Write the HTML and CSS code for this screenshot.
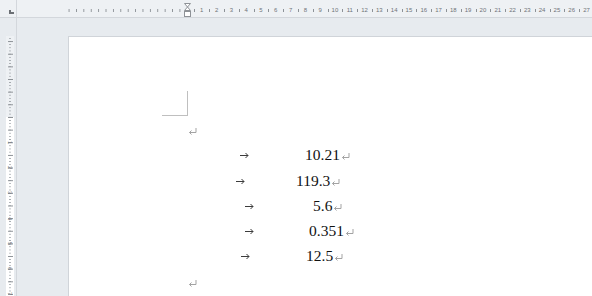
FILE: index.html
```html
<!DOCTYPE html>
<html lang="ja">
<head>
    <meta charset="UTF-8">
    <meta name="viewport" content="width=device-width, initial-scale=1.0">
    <title>Document</title>
    <link rel="stylesheet" href="styles.css">
</head>
<body>
    <div class="topbar">
        <div class="corner">
            <svg class="tab-selector" width="5" height="4" viewBox="0 0 5 4"><path d="M0 0h2v2h3v2H0z" fill="#6b6f74"/></svg>
        </div>
        <div class="hruler">
            <div class="hruler-margin"></div>
            <div class="indent-marker">
                <svg width="7" height="14" viewBox="0 0 7 14">
                    <path d="M0.5 0.5h6L3.5 4l3 3.5h-6L3.5 4z" fill="#fff" stroke="#8e9297"/>
                    <rect x="0.5" y="8.5" width="6" height="5" fill="#fff" stroke="#8e9297"/>
                </svg>
            </div>
            <div class="hruler-scale">
                <span>1</span><span>2</span><span>3</span><span>4</span><span>5</span><span>6</span><span>7</span><span>8</span><span>9</span>
                <span>10</span><span>11</span><span>12</span><span>13</span><span>14</span><span>15</span><span>16</span><span>17</span><span>18</span>
                <span>19</span><span>20</span><span>21</span><span>22</span><span>23</span><span>24</span><span>25</span><span>26</span><span>27</span>
            </div>
        </div>
    </div>

    <div class="main">
        <div class="vruler">
            <div class="vruler-margin"></div>
            <div class="vruler-text">
                <span>1</span><span>2</span><span>3</span><span>4</span><span>5</span><span>6</span><span>7</span>
            </div>
        </div>

        <div class="workspace">
            <div class="page">
                <div class="crop-mark"></div>
                <div class="body-text">
                    <p class="para"><svg class="mark" width="9" height="7" viewBox="0 0 9 7"><path d="M8 0v4.5H1.5M3.5 2.5l-2 2 2 2" fill="none" stroke="#a3a3a3"/></svg></p>
                    <p class="para row-1"><span class="tab"><svg width="9" height="7" viewBox="0 0 9 7"><path d="M0 3.5h8M5.5 1 8 3.5 5.5 6" fill="none" stroke="#3c3c3c"/></svg></span><span class="num">10.21</span><svg class="mark" width="9" height="7" viewBox="0 0 9 7"><path d="M8 0v4.5H1.5M3.5 2.5l-2 2 2 2" fill="none" stroke="#a3a3a3"/></svg></p>
                    <p class="para row-2"><span class="tab"><svg width="9" height="7" viewBox="0 0 9 7"><path d="M0 3.5h8M5.5 1 8 3.5 5.5 6" fill="none" stroke="#3c3c3c"/></svg></span><span class="num">119.3</span><svg class="mark" width="9" height="7" viewBox="0 0 9 7"><path d="M8 0v4.5H1.5M3.5 2.5l-2 2 2 2" fill="none" stroke="#a3a3a3"/></svg></p>
                    <p class="para row-3"><span class="tab"><svg width="9" height="7" viewBox="0 0 9 7"><path d="M0 3.5h8M5.5 1 8 3.5 5.5 6" fill="none" stroke="#3c3c3c"/></svg></span><span class="num">5.6</span><svg class="mark" width="9" height="7" viewBox="0 0 9 7"><path d="M8 0v4.5H1.5M3.5 2.5l-2 2 2 2" fill="none" stroke="#a3a3a3"/></svg></p>
                    <p class="para row-4"><span class="tab"><svg width="9" height="7" viewBox="0 0 9 7"><path d="M0 3.5h8M5.5 1 8 3.5 5.5 6" fill="none" stroke="#3c3c3c"/></svg></span><span class="num">0.351</span><svg class="mark" width="9" height="7" viewBox="0 0 9 7"><path d="M8 0v4.5H1.5M3.5 2.5l-2 2 2 2" fill="none" stroke="#a3a3a3"/></svg></p>
                    <p class="para row-5"><span class="tab"><svg width="9" height="7" viewBox="0 0 9 7"><path d="M0 3.5h8M5.5 1 8 3.5 5.5 6" fill="none" stroke="#3c3c3c"/></svg></span><span class="num">12.5</span><svg class="mark" width="9" height="7" viewBox="0 0 9 7"><path d="M8 0v4.5H1.5M3.5 2.5l-2 2 2 2" fill="none" stroke="#a3a3a3"/></svg></p>
                    <p class="para"><svg class="mark" width="9" height="7" viewBox="0 0 9 7"><path d="M8 0v4.5H1.5M3.5 2.5l-2 2 2 2" fill="none" stroke="#a3a3a3"/></svg></p>
                </div>
            </div>
        </div>
    </div>
</body>
</html>
```

FILE: styles.css
```css
body {
    margin: 0;
    height: 296px;
    overflow: hidden;
    background-color: #e7ebef;
    font-family: "Liberation Sans", Arial, sans-serif;
}
.topbar {
    display: flex;
    height: 17px;
    border-bottom: 1px solid #d3d7dc;
    background-color: #eef1f4;
}
.corner {
    width: 17px;
    flex: none;
    border-right: 1px solid #d3d7dc;
    padding: 10px 0 0 9px;
    box-sizing: border-box;
}
.tab-selector {
    display: block;
}
.hruler {
    display: flex;
    padding-left: 51px;
}
.hruler-margin {
    width: 116px;
    flex: none;
    background: linear-gradient(to right, #8d9297 1px, transparent 1px) 0.6px 9px / 7.4px 3px repeat-x;
}
.indent-marker {
    width: 7px;
    flex: none;
    padding-top: 3px;
}
.indent-marker svg {
    display: block;
}
.hruler-scale {
    display: flex;
    padding-left: 3.4px;
}
.hruler-scale span {
    width: 14.8px;
    flex: none;
    text-align: center;
    font-size: 6px;
    line-height: 17px;
    padding-top: 2px;
    box-sizing: border-box;
    color: #6f7378;
    background: linear-gradient(#8d9297, #8d9297) left 9px / 1px 3px no-repeat;
}

.main {
    display: flex;
    height: 278px;
}
.vruler {
    width: 17px;
    flex: none;
    border-right: 1px solid #d3d7dc;
    padding: 18px 0 0 6px;
    box-sizing: border-box;
    display: flex;
    flex-direction: column;
}
.vruler-margin {
    width: 8px;
    height: 81px;
    flex: none;
    background:
        linear-gradient(#8d9297 1px, transparent 1px) center 5.1px / 5px 12.65px repeat-y,
        linear-gradient(#a3a8ad 1px, transparent 1px) center 1.94px / 2px 3.1625px repeat-y,
        #eef1f4;
}
.vruler-text {
    width: 8px;
    flex: 1;
    padding-top: 12.65px;
    box-sizing: border-box;
    display: flex;
    flex-direction: column;
    background:
        linear-gradient(#8d9297 1px, transparent 1px) center 0 / 5px 12.65px repeat-y,
        linear-gradient(#a3a8ad 1px, transparent 1px) center 0 / 2px 3.1625px repeat-y,
        #fff;
}
.vruler-text span {
    height: 25.3px;
    flex: none;
    display: flex;
    align-items: center;
    justify-content: center;
    writing-mode: vertical-rl;
    font-size: 6px;
    color: #74787d;
}

.workspace {
    flex: 1;
    padding: 18px 0 0 51px;
    overflow: hidden;
}
.page {
    height: 100%;
    background-color: #fff;
    border-left: 1px solid #d0d4d9;
    border-top: 1px solid #d0d4d9;
}
.crop-mark {
    margin: 54px 0 0 93px;
    width: 25px;
    height: 24px;
    border-right: 1px solid #bfbfbf;
    border-bottom: 1px solid #bfbfbf;
}
.body-text {
    margin-left: 118px;
    font-family: "Liberation Serif", "Times New Roman", serif;
    font-size: 15.5px;
    color: #111;
}
.para {
    margin: 0;
    height: 25.3px;
    line-height: 25.3px;
    padding-top: 1px;
    box-sizing: border-box;
    white-space: nowrap;
}
.mark {
    margin-left: 1px;
}
.tab {
    display: inline-block;
    margin-left: var(--tab);
    width: calc(var(--num) - var(--tab));
}
.tab svg {
    vertical-align: 1px;
}
.num + .mark {
    margin-left: 1px;
}
.row-1 { --tab: 53px; --num: 118px; }
.row-2 { --tab: 49px; --num: 109px; }
.row-3 { --tab: 58px; --num: 126px; }
.row-4 { --tab: 58px; --num: 122px; }
.row-5 { --tab: 54px; --num: 119px; }
```
